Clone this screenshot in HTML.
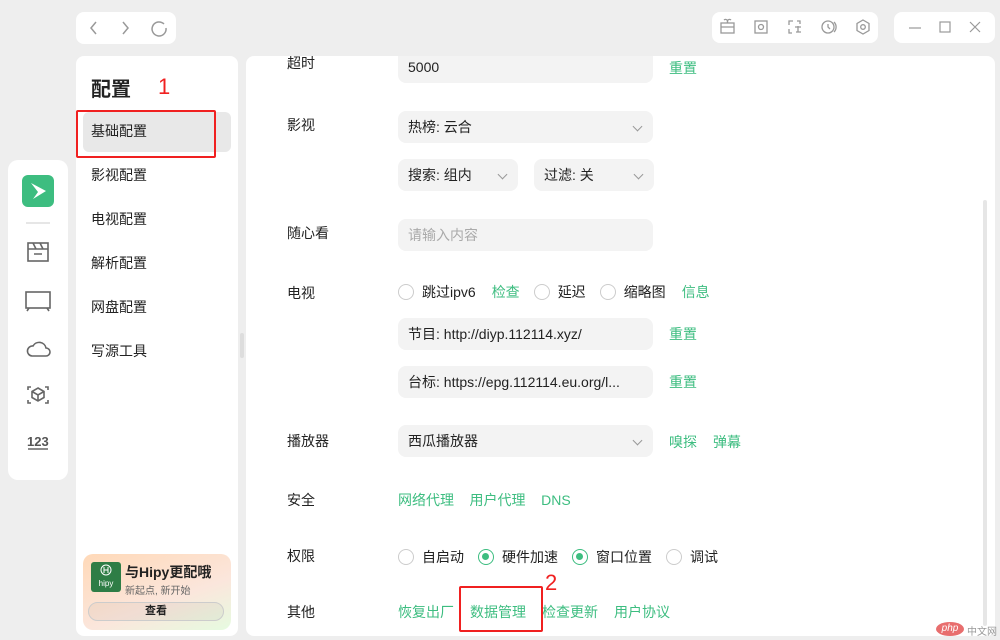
<!DOCTYPE html>
<html><head><meta charset="utf-8"><style>
*{margin:0;padding:0;box-sizing:border-box}
body{width:1000px;height:640px;background:#eeeeee;font-family:"Liberation Sans","Noto Sans CJK SC",sans-serif;font-size:14px;color:#222;position:relative;overflow:hidden}
.box{position:absolute;background:#fff;border-radius:8px}
.a{position:absolute}
.g{color:#3dbd80}
.inp{position:absolute;background:#f3f3f3;border-radius:8px;height:32px;line-height:32px;padding-left:10px;font-size:14px;color:#222}
.chev{position:absolute;right:12px;top:12px;width:7px;height:7px;border-right:1.3px solid #999;border-bottom:1.3px solid #999;transform:rotate(45deg)}
.lbl{position:absolute;left:287px;font-size:14px}
.rad{display:inline-block;width:16px;height:16px;border:1px solid #ccc;border-radius:50%;vertical-align:-3px;margin-right:8px;position:relative}
.rad.on{border:1.5px solid #3dbd80}
.rad.on:after{content:"";position:absolute;left:3px;top:3px;width:7px;height:7px;border-radius:50%;background:#3dbd80}
.red{position:absolute;border:2px solid #f02020;border-radius:2px}
</style></head><body>
<div class="box" style="left:76px;top:12px;width:100px;height:32px"></div>
<svg class="a" style="left:76px;top:12px" width="100" height="32"><path d="M20 10l-5 6 5 6" stroke="#999" stroke-width="1.5" fill="none"/><path d="M47 10l5 6-5 6" stroke="#999" stroke-width="1.5" fill="none"/><path d="M88 12a7 7 0 1 0 2 4" stroke="#999" stroke-width="1.5" fill="none"/></svg>
<div class="box" style="left:712px;top:12px;width:166px;height:31px"></div>
<svg class="a" style="left:712px;top:12px" width="166" height="31" fill="none" stroke="#999" stroke-width="1.3"><rect x="9" y="11" width="13" height="10"/><path d="M9 15h13M12 8a2 2 0 1 1 3 3M19 8a2 2 0 1 0-3 3"/><rect x="43" y="9" width="12" height="12"/><circle cx="49" cy="15" r="2.5"/><path d="M77 13v-4h4M85 9h3v3M77 17v4h3M83 15h6M86 14v6M84 20h5"/><circle cx="116" cy="15" r="6"/><path d="M116 12v3l2 2M122 10a7 7 0 0 1 0 10"/><path d="M151 8l6 3.5v7l-6 3.5-6-3.5v-7z"/><circle cx="151" cy="15" r="2.3"/></svg>
<div class="box" style="left:894px;top:12px;width:101px;height:31px"></div>
<svg class="a" style="left:894px;top:12px" width="101" height="31" fill="none" stroke="#999" stroke-width="1.2"><path d="M15 16h12"/><rect x="46" y="10" width="10" height="10"/><path d="M76 10l10 10M86 10l-10 10"/></svg>

<div class="box" style="left:8px;top:160px;width:60px;height:320px;border-radius:10px"></div>
<div class="a" style="left:22px;top:175px;width:32px;height:32px;background:#3dbd80;border-radius:6px"></div>
<svg class="a" style="left:22px;top:175px" width="32" height="32"><path d="M9 8l15 8-13 8 5-7z" fill="#fff"/></svg>
<div class="a" style="left:26px;top:222px;width:24px;height:1.5px;background:#e6e6e6"></div>
<svg class="a" style="left:24px;top:238px" width="30" height="230" fill="none" stroke="#666" stroke-width="1.6"><rect x="4" y="5" width="20" height="18"/><path d="M4 11h20M9 5l3 6M16 5l3 6M10 16h8"/><rect x="2" y="54" width="24" height="16"/><path d="M5 70l-2 3M23 70l2 3"/><path d="M8 118a5 5 0 0 1 1-10 7 7 0 0 1 13 2 4 4 0 0 1 0 8z"/><path d="M4 152v-3h3M21 149h3v3M4 162v3h3M21 165h3v-3M14 150l6 3.5v6l-6 3.5-6-3.5v-6zM8 153.5l6 3.5 6-3.5M14 157v6"/><path d="M4 211h20"/><text x="3" y="208" font-size="13" font-weight="bold" fill="#555" stroke="none" font-family="Liberation Sans">123</text></svg>

<div class="box" style="left:76px;top:56px;width:162px;height:580px"></div>
<div class="a" style="left:91px;top:73px;font-size:20px;font-weight:bold">配置</div>
<div class="a" style="left:158px;top:74px;font-size:22px;color:#f02020">1</div>
<div class="a" style="left:83px;top:112px;width:148px;height:40px;background:#e8e8e8;border-radius:6px"></div>
<div class="a" style="left:91px;top:121px">基础配置</div>
<div class="a" style="left:91px;top:165px">影视配置</div>
<div class="a" style="left:91px;top:209px">电视配置</div>
<div class="a" style="left:91px;top:253px">解析配置</div>
<div class="a" style="left:91px;top:297px">网盘配置</div>
<div class="a" style="left:91px;top:341px">写源工具</div>
<div class="red" style="left:76px;top:110px;width:140px;height:48px"></div>
<div class="a" style="left:83px;top:554px;width:148px;height:76px;border-radius:10px;background:linear-gradient(160deg,#ffd9b8,#fbe6dc 60%,#e6fbe0)"></div>
<div class="a" style="left:91px;top:562px;width:30px;height:30px;background:#2e7d46;border-radius:3px;color:#fff;font-size:8px;text-align:center;padding-top:17px">hipy</div>
<svg class="a" style="left:99px;top:562px" width="14" height="16"><circle cx="7" cy="8" r="5" stroke="#fff" fill="none"/><path d="M5 5v6M9 5v6M5 8h4" stroke="#fff"/></svg>
<div class="a" style="left:125px;top:562px;font-size:14px;font-weight:bold">与Hipy更配哦</div>
<div class="a" style="left:125px;top:582px;font-size:10px;color:#666">新起点, 新开始</div>
<div class="a" style="left:88px;top:602px;width:136px;height:19px;border:1.5px solid #ccc;border-radius:10px;background:rgba(0,0,0,.04);text-align:center;font-size:11px;line-height:16px;font-weight:bold">查看</div>
<div class="a" style="left:240px;top:333px;width:4px;height:25px;background:#ddd;border-radius:2px"></div>

<div class="box" style="left:246px;top:56px;width:749px;height:580px;overflow:hidden">
<div class="a" style="left:737px;top:144px;width:4px;height:426px;background:#e6e6e6;border-radius:2px"></div>
</div>
<div class="lbl" style="top:56px;height:16px;overflow:hidden;line-height:14px"><span style="position:relative;top:0px">超时</span></div>
<div class="inp" style="left:398px;top:56px;width:255px;height:27px;border-radius:0 0 8px 8px;line-height:22px">5000</div>
<div class="a g" style="left:669px;top:58px">重置</div>
<div class="lbl" style="top:115px">影视</div>
<div class="inp" style="left:398px;top:111px;width:255px">热榜: 云合<i class="chev"></i></div>
<div class="inp" style="left:398px;top:159px;width:120px">搜索: 组内<i class="chev"></i></div>
<div class="inp" style="left:534px;top:159px;width:120px">过滤: 关<i class="chev"></i></div>
<div class="lbl" style="top:223px">随心看</div>
<div class="inp" style="left:398px;top:219px;width:255px;color:#aaa">请输入内容</div>
<div class="lbl" style="top:283px">电视</div>
<div class="a" style="left:398px;top:282px;white-space:nowrap"><span class="rad"></span>跳过ipv6<span class="g" style="margin:0 14px 0 16px">检查</span><span class="rad"></span>延迟<span style="display:inline-block;width:14px"></span><span class="rad"></span>缩略图<span class="g" style="margin-left:16px">信息</span></div>
<div class="inp" style="left:398px;top:318px;width:255px">节目: http://diyp.112114.xyz/</div>
<div class="a g" style="left:669px;top:324px">重置</div>
<div class="inp" style="left:398px;top:366px;width:255px">台标: https://epg.112114.eu.org/l...</div>
<div class="a g" style="left:669px;top:372px">重置</div>
<div class="lbl" style="top:431px">播放器</div>
<div class="inp" style="left:398px;top:425px;width:255px">西瓜播放器<i class="chev"></i></div>
<div class="a g" style="left:669px;top:432px">嗅探</div>
<div class="a g" style="left:713px;top:432px">弹幕</div>
<div class="lbl" style="top:490px">安全</div>
<div class="a g" style="left:398px;top:490px">网络代理&nbsp;&nbsp;&nbsp;&nbsp;用户代理&nbsp;&nbsp;&nbsp;&nbsp;DNS</div>
<div class="lbl" style="top:546px">权限</div>
<div class="a" style="left:398px;top:547px;white-space:nowrap"><span class="rad"></span>自启动<span style="display:inline-block;width:14px"></span><span class="rad on"></span>硬件加速<span style="display:inline-block;width:14px"></span><span class="rad on"></span>窗口位置<span style="display:inline-block;width:14px"></span><span class="rad"></span>调试</div>
<div class="lbl" style="top:602px">其他</div>
<div class="a g" style="left:398px;top:602px;white-space:nowrap">恢复出厂<span style="margin-left:16px">数据管理</span><span style="margin-left:16px">检查更新</span><span style="margin-left:16px">用户协议</span></div>
<div class="red" style="left:459px;top:586px;width:84px;height:46px"></div>
<div class="a" style="left:545px;top:570px;font-size:22px;color:#f02020">2</div>
<div class="a" style="left:936px;top:622px;width:28px;height:14px;border-radius:50%;background:#e86e6e;color:#fff;font-size:10px;text-align:center;line-height:13px;font-style:italic">php</div>
<div class="a" style="left:967px;top:623px;font-size:10px;color:#999">中文网</div>
</body></html>
